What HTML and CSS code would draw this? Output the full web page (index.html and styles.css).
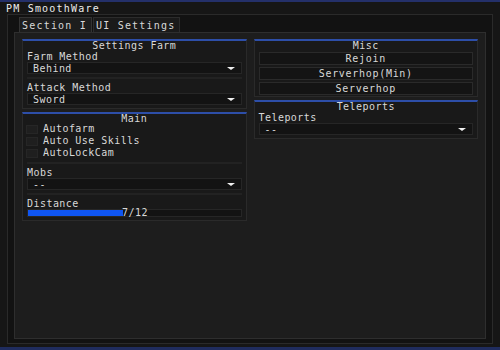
FILE: index.html
```html
<!DOCTYPE html>
<html lang="en">
<head>
    <meta charset="UTF-8">
    <meta name="viewport" content="width=device-width, initial-scale=1.0">
    <title>PM SmoothWare</title>
    <link rel="stylesheet" href="styles.css">
</head>
<body>
    <div class="app">
        <div class="topline"></div>
        <div class="titlebar">PM SmoothWare</div>
        <div class="frame">
            <div class="tabs">
                <div class="tab active">Section I</div>
                <div class="tab">UI Settings</div>
            </div>
            <div class="panel">
                <div class="column">
                    <div class="section">
                        <div class="section-title">Settings Farm</div>
                        <div class="label">Farm Method</div>
                        <div class="dropdown">Behind<span class="arrow"></span></div>
                        <div class="separator"></div>
                        <div class="label">Attack Method</div>
                        <div class="dropdown">Sword<span class="arrow"></span></div>
                    </div>
                    <div class="section">
                        <div class="section-title">Main</div>
                        <div class="check"><span class="box"></span>Autofarm</div>
                        <div class="check"><span class="box"></span>Auto Use Skills</div>
                        <div class="check"><span class="box"></span>AutoLockCam</div>
                        <div class="separator"></div>
                        <div class="label">Mobs</div>
                        <div class="dropdown">--<span class="arrow"></span></div>
                        <div class="separator"></div>
                        <div class="label">Distance</div>
                        <div class="slider">
                            <div class="fill" style="width: 44.6%"></div>
                            <span class="value">7/12</span>
                        </div>
                    </div>
                </div>
                <div class="column">
                    <div class="section buttons">
                        <div class="section-title">Misc</div>
                        <div class="button">Rejoin</div>
                        <div class="button">Serverhop(Min)</div>
                        <div class="button">Serverhop</div>
                    </div>
                    <div class="section">
                        <div class="section-title">Teleports</div>
                        <div class="label">Teleports</div>
                        <div class="dropdown">--<span class="arrow"></span></div>
                    </div>
                </div>
            </div>
        </div>
        <div class="bottomline"></div>
    </div>
</body>
</html>
```

FILE: styles.css
```css
body {
    margin: 0;
    padding: 0;
    background-color: #161616;
    font-family: "DejaVu Sans Mono", "Liberation Mono", monospace;
    font-size: 10px;
    letter-spacing: 0.45px;
    color: #d8d8d8;
}
.app {
    width: 500px;
    height: 350px;
    display: flex;
    flex-direction: column;
    overflow: hidden;
}
.topline {
    height: 2px;
    background-color: #24306a;
}
.titlebar {
    height: 11px;
    padding-top: 1px;
    line-height: 12px;
    padding-left: 6px;
    letter-spacing: 1.2px;
    color: #ececec;
}
.frame {
    flex: 1;
    margin: 0 7px 3px 7px;
    border: 1px solid #2a2a2a;
    background-color: #121212;
    padding: 2px 6px 4px 6px;
    display: flex;
    flex-direction: column;
}
.tabs {
    display: flex;
    height: 15px;
    padding-left: 5px;
}
.tab {
    height: 14px;
    line-height: 15px;
    padding: 0 4px 0 2px;
    letter-spacing: 1.2px;
    border: 1px solid #2c2c2c;
    border-bottom: none;
    background-color: #1a1a1a;
    margin-right: 1px;
}
.tab.active {
    background-color: #1d1d1d;
    border-color: #333333;
}
.panel {
    flex: 1;
    border: 1px solid #2e2e2e;
    background-color: #1d1d1d;
    padding: 6px 7px 0 7px;
    display: flex;
    gap: 7px;
    align-items: flex-start;
}
.column {
    flex: 1;
    display: flex;
    flex-direction: column;
    gap: 3px;
}
.section {
    border: 1px solid #2a2a2a;
    border-top: 2px solid #2d4ea8;
    background-color: #191919;
    padding: 0 4px 3px 4px;
    display: flex;
    flex-direction: column;
}
.section.buttons {
    padding-bottom: 0;
}
.section-title {
    text-align: center;
    height: 9px;
    line-height: 9px;
}
.label {
    height: 9px;
    line-height: 9px;
    margin-bottom: 1px;
}
.dropdown {
    position: relative;
    height: 10px;
    line-height: 11px;
    padding-left: 5px;
    background-color: #131313;
    border: 1px solid #262626;
}
.arrow {
    position: absolute;
    right: 6px;
    top: 4px;
    width: 0;
    height: 0;
    border-left: 4px solid transparent;
    border-right: 4px solid transparent;
    border-top: 3px solid #f0f0f0;
}
.separator {
    height: 2px;
    margin: 3px 0 4px 0;
    background-color: #222222;
}
.check {
    display: flex;
    align-items: center;
    height: 12px;
    line-height: 12px;
}
.box {
    width: 10px;
    height: 7px;
    background-color: #1f1f1f;
    border: 1px solid #262626;
    margin: 0 5px 0 -1px;
}
.slider {
    position: relative;
    height: 6px;
    background-color: #131313;
    border: 1px solid #262626;
}
.fill {
    height: 100%;
    background-color: #0f55f2;
}
.value {
    position: absolute;
    left: 94px;
    top: -3px;
    line-height: 11px;
}
.button {
    height: 11px;
    line-height: 12px;
    margin-top: 1px;
    margin-bottom: 1px;
    text-align: center;
    letter-spacing: 0.7px;
    background-color: #141414;
    border: 1px solid #2a2a2a;
}
.section-title + .button {
    margin-top: 2px;
}
.section-title + .label {
    margin-top: 2px;
}
.bottomline {
    height: 3px;
    background-color: #1f2c5e;
}
```
